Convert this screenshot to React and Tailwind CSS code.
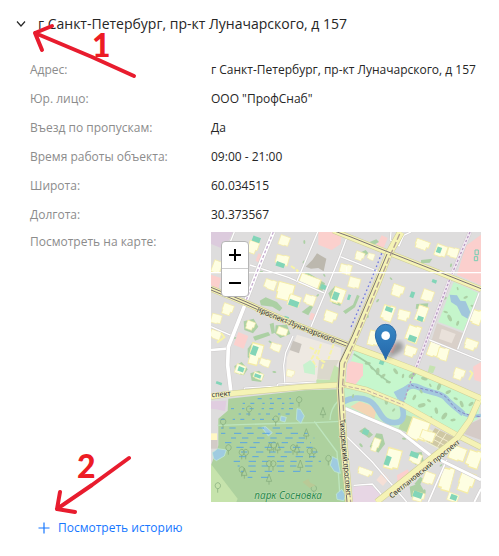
import { useState } from "react";

const ADDRESS = "г Санкт-Петербург, пр-кт Луначарского, д 157";

const details = [
  { label: "Адрес:", value: ADDRESS },
  { label: "Юр. лицо:", value: 'ООО "ПрофСнаб"' },
  { label: "Въезд по пропускам:", value: "Да" },
  { label: "Время работы объекта:", value: "09:00 - 21:00" },
  { label: "Широта:", value: "60.034515" },
  { label: "Долгота:", value: "30.373567" },
];

// x, y (center), width, height
const buildings = [
  [220, 26, 34, 32], [214, 84, 42, 34], [126, 46, 34, 40], [18, 104, 30, 40],
  [178, 158, 38, 34], [222, 178, 56, 56], [250, 206, 40, 36], [296, 204, 36, 34],
  [50, 232, 36, 36], [16, 260, 34, 30], [14, 308, 36, 30], [358, 254, 42, 36],
  [382, 190, 40, 50], [404, 112, 38, 34], [118, 280, 28, 28], [214, 298, 34, 24],
  [194, 346, 34, 26], [134, 366, 40, 70], [296, 148, 70, 36], [162, 392, 34, 26],
  [446, 72, 30, 28], [430, 152, 38, 34], [480, 74, 22, 22],
  [634, 38, 48, 30], [690, 56, 38, 38], [726, 62, 36, 34], [560, 176, 40, 38],
  [650, 190, 38, 36], [530, 244, 38, 54], [578, 250, 40, 34], [632, 244, 34, 50],
  [606, 306, 42, 58], [598, 358, 40, 34], [488, 318, 34, 48], [796, 256, 36, 50],
  [780, 338, 44, 34], [668, 352, 36, 46], [696, 366, 34, 44], [744, 426, 36, 36],
  [88, 412, 32, 30], [142, 432, 32, 22], [238, 424, 26, 22],
  [622, 592, 64, 68], [650, 612, 46, 34], [494, 638, 24, 44], [546, 680, 48, 66],
  [614, 680, 38, 34], [462, 720, 50, 22], [654, 738, 36, 38], [706, 742, 40, 80],
  [766, 750, 50, 66], [740, 664, 54, 46], [788, 682, 44, 60], [622, 794, 40, 30],
  [726, 796, 36, 26],
];

const teal = [
  [136, 22, 24, 16], [208, 98, 26, 14], [248, 214, 30, 18], [374, 192, 18, 24],
  [340, 166, 22, 14], [130, 356, 18, 28], [534, 232, 22, 14], [604, 320, 24, 18],
  [628, 260, 18, 14], [604, 188, 12, 18], [530, 686, 16, 28], [610, 668, 26, 16],
  [90, 412, 18, 14], [140, 432, 20, 10], [24, 454, 18, 8], [620, 788, 28, 18],
  [684, 54, 14, 18], [728, 796, 20, 16], [670, 148, 14, 10], [464, 600, 18, 16],
  [512, 392, 14, 12], [540, 292, 8, 12], [226, 258, 14, 10], [414, 196, 8, 16],
];

const greens = [
  "M146 206l18-10l34 14l16 18l-8 10l-22-14l-34-4z", "M98 268l30-8l14 24l-16 20l-26-10z",
  "M194 280l34-2l10 28l-30 12l-16-14z", "M126 314l46-14l6 10l-46 16z",
  "M268 132l20-12l54 34l-8 24l-56-22z", "M352 184l20-22l26 12l-10 48l-24-8z",
  "M272 240l28-22l6 6l-14 26z", "M396 238l30-20l12-30l8 4l-14 34l-28 20z",
  "M616 216l36-2l-4 20l-34-4z", "M476 644l20-40l18 2l8 30l-20 26z",
  "M598 664l34-4l6 26l-24 12l-16-12z", "M444 598l18-12l24 22l-12 10z",
  "M70 402l22-12l18 22l-12 18l-24-6z", "M118 424l26-8l16 14l-10 20l-28-4z",
  "M110 350l16-20l12 6l-14 48l-14-8z", "M434 68l30-14l8 10l-26 18z",
  "M630 84l34-4l-8 12l-26 2z", "M596 764l30-10l14 24l-14 26l-26-10z",
  "M476 30l20-8l8 8l-18 10z", "M176 276l12-4l4 30l-10 4z", "M610 756l18-22l8 6l-12 24z",
];

// x, y, size of bushes along the river and in the yards
const scrub = [
  [470, 394, 9], [482, 408, 6], [500, 418, 11], [516, 432, 9], [532, 450, 8], [554, 418, 10],
  [576, 432, 7], [604, 430, 12], [640, 440, 10], [658, 460, 6], [684, 464, 11], [712, 480, 9],
  [734, 500, 7], [752, 516, 10], [610, 496, 9], [632, 520, 12], [654, 506, 7], [676, 536, 10],
  [700, 552, 12], [726, 564, 8], [486, 490, 8], [526, 508, 10], [548, 534, 6], [510, 376, 7],
  [596, 530, 7], [660, 560, 8], [780, 516, 9], [566, 398, 6], [630, 478, 7], [426, 492, 6],
  [700, 200, 8], [704, 240, 7], [716, 258, 11], [740, 274, 8], [764, 196, 7], [784, 222, 6],
  [740, 170, 5], [278, 90, 5], [150, 120, 6], [178, 330, 6], [470, 252, 6], [500, 206, 6],
  [70, 318, 6], [540, 140, 5], [280, 30, 6], [320, 190, 5], [580, 620, 7], [450, 640, 7],
  [640, 780, 8], [690, 700, 5], [190, 420, 6], [340, 130, 5], [720, 100, 6], [62, 118, 5],
];

const marshRows = [
  { y: 500, from: 140, to: 240 }, { y: 514, from: 90, to: 255 }, { y: 530, from: 60, to: 260 },
  { y: 546, from: 70, to: 250 }, { y: 562, from: 24, to: 200 }, { y: 588, from: 30, to: 250 },
  { y: 604, from: 30, to: 290 }, { y: 618, from: 60, to: 310 }, { y: 632, from: 40, to: 300 },
  { y: 646, from: 60, to: 320 }, { y: 660, from: 80, to: 320 }, { y: 674, from: 60, to: 330 },
  { y: 688, from: 50, to: 330 }, { y: 702, from: 80, to: 310 }, { y: 718, from: 90, to: 300 },
  { y: 736, from: 110, to: 190 },
];

const trees = [
  [114, 536], [264, 508], [336, 540], [194, 566], [36, 574], [286, 604], [52, 652],
  [92, 666], [176, 646], [188, 644], [104, 666], [200, 646], [246, 652], [296, 662],
  [258, 652], [308, 662], [174, 700], [268, 698], [186, 700], [92, 718], [100, 722],
  [308, 774], [20, 766], [174, 740], [352, 684],
];

const Road = ({ d, width = 8, fill = "#fff", edge = "#cfcccc" }) => (
  <g fill="none" strokeLinejoin="round">
    <path d={d} stroke={edge} strokeWidth={width + 3} />
    <path d={d} stroke={fill} strokeWidth={width} />
  </g>
);

const YellowRoad = ({ d, width = 19 }) => (
  <Road d={d} width={width} fill="#f5f3b5" edge="#cfce96" />
);

const MapPicture = () => (
  <svg viewBox="0 0 810 810" className="block w-full h-full" role="img" aria-label="Карта">
    <rect width="810" height="810" fill="#dedddd" />

    {/* Land use */}
    <path d="M0 0H66L40 52L0 36z" fill="#dccbdd" />
    <path d="M0 128L30 138L22 172L0 160z" fill="#fbd0cd" />
    <path d="M322 0H392L389 36L362 54L322 38z" fill="#fbd0cd" />
    <path d="M512 10L530 18L518 48L496 40z" fill="#fbd0cd" />
    <path d="M764 42L810 8V160L738 128z" fill="#fbcfcd" />
    <path d="M82 300L112 312L98 350L68 338z" fill="#fbd0cd" />
    <path d="M300 242L312 246L306 266L294 262z" fill="#fbd0cd" />
    <path d="M142 64L152 68L144 92L134 86z" fill="#fbd0cd" />
    <path d="M542 330L556 338L546 364L530 356z" fill="#f7cbcb" />
    <path d="M304 84L318 64L346 80L338 118L322 108L300 110L284 104z" fill="#bcb8ae" />
    <path d="M258 308L390 348L386 458L222 458L228 376z" fill="#eee9e2" />
    <path d="M246 326L272 336L264 364L236 354z" fill="#c8c3bc" />
    <path d="M324 384H384L372 412L356 444L318 440z" fill="#dbd8cc" />
    <path d="M370 400L388 410V456H310L318 442L356 444z" fill="#c4e3ae" />
    <path d="M728 150L804 184L758 298L682 270z" fill="#c5f5cb" />
    <path d="M716 188L738 190L748 206L764 208L778 240L770 260L752 250L738 222L720 210z" fill="#a1c6dc" />
    <path d="M678 274L756 304L738 354L662 324z" fill="#d9d0c9" />
    <path d="M692 290L734 306L722 334L684 320z" fill="#e9e1da" />
    <path d="M432 350L560 398L810 504L800 560L737 602L577 512L467 468L398 455z" fill="#c6f7cd" />
    <path d="M410 396L422 388L456 396L456 430L430 462L404 452z" fill="#fccfcd" />
    <path d="M398 466L467 478L577 525L640 566L590 600L562 594L402 530z" fill="#c6f0c8" />
    <path d="M582 548L640 566L600 606L562 590z" fill="#b9d8a4" />
    <path d="M418 524L446 508L478 520L496 534L490 562z" fill="#f3d5b5" />
    <path d="M600 566L730 624L690 654L590 604z" fill="#eeefd0" />
    <path d="M672 588L730 616L696 654L646 628z" fill="#cfc8a4" />
    <path d="M664 604l50 26M656 616l48 26M686 594l-28 40M706 604l-26 40" stroke="#f2edcf" strokeWidth="3" />
    <path d="M780 574L810 560V624L760 606z" fill="#d5cbc7" />
    <path d="M428 764L480 758L512 792L496 810H422z" fill="#e7d6e4" />
    <path d="M558 730L590 712L598 728L560 754z" fill="#fccfcd" />
    <path d="M496 744l20-24l18 20l-18 22z" fill="#f5dfd6" />
    <path d="M656 400L674 404L666 424L650 420z" fill="#c5e3b0" />
    <path d="M786 404L810 390V450L790 444z" fill="#fbd0cd" />

    {/* River */}
    <path
      d="M396 510C420 496 450 494 474 506S500 540 517 558S570 578 576 556S562 500 574 484S600 452 628 468S690 480 704 498S740 530 757 546"
      fill="none"
      stroke="#a3c9de"
      strokeWidth="17"
    />
    <path d="M548 480L584 462L586 498L560 502z" fill="#a3c9de" />
    <path d="M757 546L780 554L810 550" fill="none" stroke="#a3c9de" strokeWidth="10" />
    <path d="M600 458C640 480 690 470 716 508S770 550 810 554" fill="none" stroke="#8684c4" strokeWidth="3" strokeDasharray="9 6" />

    {/* Park */}
    <path d="M52 500L282 475L384 472L398 620L412 810H60L0 734V700L22 640V560L50 536z" fill="#add19e" />
    <path d="M0 696L80 800L76 810H0z" fill="#c6e3ac" />
    <path d="M0 508L46 506L42 538L16 532L0 530z" fill="#e0cde0" />
    <path d="M0 604H18V624H0z" fill="#fff7c4" />
    <path d="M0 624H20V650H0z" fill="#d2cbc7" />
    <path d="M20 580L150 576L310 572L388 568M310 568L378 660L386 780M382 506Q358 530 357 564" fill="none" stroke="#bde5bd" strokeWidth="4" />
    <g fill="#9fcbe0" stroke="#c4edda" strokeWidth="2">
      <path d="M258 530L268 532L280 552L270 574L256 562z" />
      <path d="M152 586L164 584L184 602L172 612z" />
      <path d="M210 552L226 556L222 570L208 566z" />
      <path d="M4 662L20 650L46 654L40 672L16 686L8 680z" />
      <path d="M364 674L380 682L388 724L370 718L358 700z" />
      <path d="M376 786L392 772L404 790L398 806L378 802z" />
    </g>
    <g stroke="#5aa5e2" strokeWidth="3">
      {marshRows.map(({ y, from, to }, i) => (
        <path
          key={y}
          d={`M${from} ${y}H${to}`}
          strokeDasharray={i < 5 ? "12 24 7 16" : "22 18 19 26"}
          strokeDashoffset={(i * 31) % 70}
        />
      ))}
    </g>
    <g fill="none" stroke="#80a878" strokeWidth="2">
      {trees.map(([x, y], i) =>
        i % 3 === 2 ? (
          <path key={i} d={`M${x} ${y - 14}l-8 22h16zM${x} ${y + 8}v10`} />
        ) : (
          <path key={i} d={`M${x} ${y + 16}v-12m0 0a8 9 0 1 1 1 0z`} />
        )
      )}
    </g>
    <path d="M274 750l18-10l6 12l16 8l-18 8z" fill="#b9c996" />

    {/* Vegetation and buildings */}
    <g fill="#acd0a4">
      {greens.map((d) => (
        <path key={d} d={d} />
      ))}
      {scrub.map(([x, y, r], i) => (
        <ellipse key={i} cx={x} cy={y} rx={r} ry={r / 2} transform={`rotate(${(i * 47) % 180} ${x} ${y})`} />
      ))}
    </g>
    <path d="M428 366L466 390L504 428L536 452" fill="none" stroke="#a3cda3" strokeWidth="5" />
    <g fill="#fefee2" stroke="#f5eca6" strokeWidth="6">
      {buildings.map(([x, y, w, h], i) => (
        <path
          key={i}
          transform={`translate(${x} ${y}) rotate(${i % 4 === 1 ? 15 : 20}) scale(${w / 100} ${h / 100})`}
          d={
            i % 3 === 0
              ? "M-44 -44H44V40H14V48H-44z"
              : i % 3 === 1
                ? "M-46 -40H6V-46H44V42H-20V34H-46z"
                : "M-44 -44H44V14H30V46H-38V12H-44z"
          }
        />
      ))}
    </g>
    <g fill="#82d5b8">
      {teal.map(([x, y, w, h], i) => (
        <rect key={i} x={x - w / 2} y={y - h / 2} width={w} height={h} transform={`rotate(20 ${x} ${y})`} />
      ))}
    </g>
    <g fill="none" stroke="#f7f3a8" strokeWidth="6">
      <path d="M296 346l20 10l-14 24l14 26M330 336l-12 42l22 12l-10 24M368 336l-16 46M240 102l20 14l-4 12" strokeDasharray="14 5" />
      <path d="M30 302l10 14l-22 16M776 416l8 8l-10 20" />
    </g>
    <path d="M276 398l22-14l14 16v28l-32-6z" fill="#c9f2cf" />
    <g fill="none" stroke="#78cdb4" strokeWidth="3">
      <path d="M792 54h10v14h-10zM790 74h10v12h-10z" />
    </g>

    {/* Minor streets */}
    <Road d="M70 0L40 74" width={4} />
    <Road d="M117 99L232 136L342 184" width={4} />
    <Road d="M320 0L257 150" width={4} />
    <Road d="M410 10L386 74L342 184L300 284" width={4} />
    <Road d="M388 74L500 118" width={4} />
    <Road d="M246 312L224 362L218 400L222 460" width={4} />
    <Road d="M0 354L50 350" width={8} />
    <Road d="M0 284L60 310" width={4} />
    <Road d="M100 476V468L200 462V456L316 450" width={3} />
    <Road d="M102 218L52 345L50 400L60 482" width={11} />
    <Road d="M804 184L740 352" width={4} />
    <Road d="M652 322L810 386" width={4} />
    <Road d="M402 609L484 690L587 810" width={4} />
    <Road d="M428 760L484 756L520 798" width={4} />
    <Road d="M707 684L652 810" width={5} />
    <Road d="M810 770L790 810" width={6} />
    <Road d="M540 0L538 24L564 42L578 10L600 0" width={4} />
    <Road d="M402 529L567 599L657 669L810 744" width={9} />
    <Road d="M187 0L150 90L102 214" width={12} />
    <path d="M187 0L150 90L102 214" fill="none" stroke="#c6aed0" strokeWidth="4" strokeDasharray="9 6" />
    <Road d="M777 0L717 140L622 390L612 414" width={10} fill="#f2e8f2" />
    <path d="M777 0L717 140L622 390L597 454L577 514" fill="none" stroke="#b79cc1" strokeWidth="4" strokeDasharray="7 6" />

    {/* Avenues */}
    <YellowRoad d="M0 494L48 486L282 464L400 458L467 474L577 519L737 609L810 646" width={15} />
    <YellowRoad d="M810 490L777 564L737 620L677 666L497 810" width={16} />
    <YellowRoad d="M367 -4L417 16L537 64L677 119L810 172" width={14} />
    <YellowRoad d="M0 170L102 212L232 270L427 345L524 380L622 418L707 454L810 500" width={16} />
    <YellowRoad d="M570 0L534 64L500 150L432 312L396 392L388 470L397 620L414 810" width={20} />
    <g fill="none" stroke="#7b7274" strokeWidth="3">
      <path d="M367 -4L417 14L537 62L677 117L810 170M0 166L102 208L232 266L410 334" />
      <path d="M0 174L102 216L232 274L406 342" />
      <path d="M528 66L493 150L424 312L386 392L382 470L391 620L408 810" />
    </g>
    <path d="M566 6L538 70L504 150L438 312L400 396L394 470L402 620L419 810" fill="none" stroke="#b09f92" strokeWidth="4" strokeDasharray="19 7" />
    <path d="M394 460L467 475L577 519" fill="none" stroke="#c4aca2" strokeWidth="3" strokeDasharray="13 6" />
    <path d="M512 64L482 140L418 290" fill="none" stroke="#7079e0" strokeWidth="4" strokeDasharray="5 8" />

    {/* Tile seams */}
    <path d="M0 122H810" stroke="#fff" strokeWidth="4" />
    <path d="M407 104V128" stroke="#fff" strokeWidth="2" />

    {/* Street names */}
    <g
      fontFamily="'Noto Sans', 'Open Sans', sans-serif"
      fontSize="22"
      fill="#2d2c2b"
      stroke="#f5f3c6"
      strokeWidth="3"
      paintOrder="stroke"
    >
      <text transform="translate(136 239) rotate(22)">проспект Луначарского</text>
      <text transform="translate(386 562) rotate(85)">Тихорецкий проспект</text>
      <text transform="translate(542 800) rotate(-39)">Светлановский проспект</text>
      <text transform="translate(2 496) rotate(-5)">спект</text>
      <text x="130" y="802" fontSize="30" fontStyle="italic" fill="#2d8a4e" stroke="#c3dfb7">
        парк Сосновка
      </text>
    </g>

    {/* Marker */}
    <defs>
      <linearGradient id="pin" x1="0" y1="0" x2="0" y2="1">
        <stop offset="0" stopColor="#3787c5" />
        <stop offset="1" stopColor="#2568aa" />
      </linearGradient>
      <filter id="soft">
        <feGaussianBlur stdDeviation="7" />
      </filter>
    </defs>
    <path d="M526 382L548 336Q564 320 574 336T556 366z" fill="#000" opacity="0.3" filter="url(#soft)" />
    <path
      d="M524 383C516 358 493 334 493 309A31 32 0 0 1 555 309C555 334 532 358 524 383z"
      fill="url(#pin)"
      stroke="#2c6ca8"
      strokeWidth="3"
    />
    <circle cx="524" cy="311" r="13" fill="#fff" />
  </svg>
);

const ZoomControl = () => (
  <div className="absolute left-[10px] top-[9px] w-7 overflow-hidden rounded border border-[#b5b5b5] bg-white">
    <button type="button" aria-label="Приблизить" className="flex h-[27px] w-full items-center justify-center border-b border-[#cccccc]">
      <svg width="12" height="12" viewBox="0 0 12 12" stroke="#000" strokeWidth="2">
        <path d="M0 6H12M6 0V12" />
      </svg>
    </button>
    <button type="button" aria-label="Отдалить" className="flex h-[27px] w-full items-center justify-center">
      <svg width="12" height="12" viewBox="0 0 12 12" stroke="#000" strokeWidth="2">
        <path d="M0 6H12" />
      </svg>
    </button>
  </div>
);

const Hints = () => (
  <svg
    className="pointer-events-none absolute left-0 top-0"
    width="240"
    height="556"
    viewBox="0 0 240 556"
    fill="none"
    stroke="#e81c2e"
    strokeWidth="4"
    strokeLinecap="round"
    strokeLinejoin="round"
  >
    <path d="M134 76L92 57L35 33M52 26L35 33L42 50" />
    <path d="M129 458L92 485L57 509M60 492L57 509L75 512" />
    <g fill="#ed1c24" stroke="none" fontFamily="Lato, sans-serif" fontWeight="900" fontSize="32">
      <text x="92" y="57">1</text>
      <text x="77" y="478">2</text>
    </g>
  </svg>
);

const App = () => {
  const [open, setOpen] = useState(true);

  return (
    <main className="relative bg-white pt-[14px] pb-5 font-['Open_Sans','Noto_Sans',sans-serif] text-xs text-[#262626]">
      <button
        type="button"
        aria-expanded={open}
        onClick={() => setOpen(!open)}
        className="flex items-center gap-3 pl-4 text-left text-sm leading-5"
      >
        <svg width="10" height="6" viewBox="0 0 10 6" fill="none" stroke="#262626" strokeWidth="1.2">
          <path d="M1 0.5L5 5L9 0.5" />
        </svg>
        <span>{ADDRESS}</span>
      </button>

      {open && (
        <section className="pt-[26px] pr-[18px] pl-[30px] leading-5">
          <dl className="flex flex-col gap-[9px]">
            {details.map(({ label, value }) => (
              <div key={label} className="grid grid-cols-[181px_1fr]">
                <dt className="text-[#8c8c8c]">{label}</dt>
                <dd className="whitespace-nowrap">{value}</dd>
              </div>
            ))}
          </dl>
          <div className="mt-[7px] grid grid-cols-[181px_1fr]">
            <span className="text-[#8c8c8c]">Посмотреть на карте:</span>
            <div className="relative aspect-square overflow-hidden">
              <MapPicture />
              <ZoomControl />
            </div>
          </div>
        </section>
      )}

      <button type="button" className="mt-4 ml-[38px] flex items-center gap-2 leading-5 text-[#1677ff]">
        <svg width="12" height="12" viewBox="0 0 12 12" stroke="currentColor" strokeWidth="1.2">
          <path d="M0.5 6H11.5M6 0.5V11.5" />
        </svg>
        Посмотреть историю
      </button>

      <Hints />
    </main>
  );
};

export default App;
